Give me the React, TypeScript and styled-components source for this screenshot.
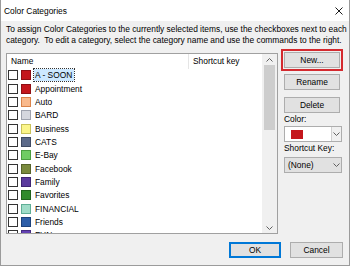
import React from "react";
import styled, { createGlobalStyle } from "styled-components";

const GlobalStyle = createGlobalStyle`
  html, body { margin: 0; padding: 0; background: #fff; }
  body {
    font-family: "Liberation Sans", Arial, sans-serif;
    font-size: 8.4px;
    color: #000;
  }
  * { box-sizing: border-box; }
`;

const Window = styled.div`
  width: 350px;
  height: 266px;
  display: flex;
  flex-direction: column;
  border: 1px solid #9b9b9b;
  border-top: none;
  background: #f0f0f0;
  overflow: hidden;
`;

const TitleBar = styled.div`
  height: 21px;
  flex: none;
  display: flex;
  align-items: center;
  justify-content: space-between;
  padding-left: 3px;
  background: #fff;
`;

const CloseBox = styled.div`
  width: 21px;
  height: 21px;
  display: flex;
  align-items: center;
  justify-content: center;
`;

const Body = styled.div`
  flex: 1;
  display: flex;
  flex-direction: column;
  padding: 3px 6px 0 5px;
`;

const Description = styled.div`
  line-height: 11px;
  white-space: nowrap;
`;

const MainRow = styled.div`
  display: flex;
  align-items: flex-start;
  margin-top: 3px;
`;

const ListBox = styled.div`
  width: 272px;
  height: 181px;
  margin-top: 4px;
  display: flex;
  background: #fff;
  border: 1px solid #a0a0a0;
`;

const ListMain = styled.div`
  flex: 1;
  display: flex;
  flex-direction: column;
  overflow: hidden;
`;

const Header = styled.div`
  height: 14.5px;
  flex: none;
  display: flex;
`;

const HeaderCell = styled.div<{ $width?: number }>`
  ${p => (p.$width ? `width: ${p.$width}px;` : "flex: 1;")}
  display: flex;
  align-items: center;
  padding-left: 4px;
  border-right: ${p => (p.$width ? "1px solid #e5e5e5" : "none")};
`;

const Row = styled.div`
  height: 13.36px;
  flex: none;
  display: flex;
  align-items: center;
  padding-left: 1px;
`;

const Check = styled.div`
  width: 10px;
  height: 10px;
  flex: none;
  background: #fff;
  border: 1px solid #333;
`;

const Swatch = styled.div<{ $fill: string; $edge: string }>`
  width: 10px;
  height: 10px;
  flex: none;
  margin-left: 3px;
  background: ${p => p.$fill};
  border: 1px solid ${p => p.$edge};
`;

const ItemName = styled.span<{ $selected?: boolean }>`
  margin-left: 3px;
  padding: 0 2px 0 1px;
  line-height: 12px;
  white-space: nowrap;
  background: ${p => (p.$selected ? "#cce8ff" : "transparent")};
  outline: ${p => (p.$selected ? "1px dotted #333" : "none")};
`;

const ScrollBar = styled.div`
  width: 15px;
  flex: none;
  display: flex;
  flex-direction: column;
  background: #f0f0f0;
`;

const ScrollArrow = styled.div`
  height: 11px;
  flex: none;
  display: flex;
  align-items: center;
  justify-content: center;
`;

const ScrollTrack = styled.div`
  flex: 1;
  padding: 0 2px;
`;

const Thumb = styled.div`
  height: 65px;
  background: #cdcdcd;
`;

const SideColumn = styled.div`
  width: 62px;
  margin-left: 3px;
  display: flex;
  flex-direction: column;
`;

const Highlight = styled.div`
  border: 2px solid #d42a2f;
  padding: 1px;
`;

const Button = styled.div<{ $width?: number; $default?: boolean }>`
  width: ${p => p.$width ?? 56}px;
  height: 16px;
  flex: none;
  display: flex;
  align-items: center;
  justify-content: center;
  background: #e1e1e1;
  border: ${p => (p.$default ? "2px solid #0078d7" : "1px solid #adadad")};
`;

const SideButton = styled(Button)<{ $gap: number }>`
  margin: ${p => p.$gap}px 0 0 3px;
`;

const SideLabel = styled.div`
  margin: 1px 0 0 3px;
  line-height: 11px;
`;

const Select = styled.div<{ $white?: boolean; $gap: number }>`
  width: 58px;
  height: 16px;
  margin: ${p => p.$gap}px 0 0 3px;
  display: flex;
  align-items: center;
  background: ${p => (p.$white ? "#fff" : "#e1e1e1")};
  border: 1px solid #adadad;
`;

const SelectValue = styled.div`
  flex: 1;
  padding-left: 3px;
  display: flex;
  align-items: center;
`;

const ColorChip = styled.div`
  width: 12px;
  height: 9px;
  margin-left: 3px;
  background: #c4161c;
`;

const DropArrow = styled.div<{ $split?: boolean }>`
  width: 10px;
  height: 100%;
  display: flex;
  align-items: center;
  justify-content: center;
  border-left: ${p => (p.$split ? "1px solid #d0d0d0" : "none")};
  background: ${p => (p.$split ? "#f0f0f0" : "transparent")};
`;

const Footer = styled.div`
  display: flex;
  justify-content: flex-end;
  gap: 9px;
  margin-top: 8px;
`;

const Chevron = ({ up }: { up?: boolean }) => (
  <svg width="7" height="4" viewBox="0 0 7 4">
    <polyline
      points={up ? "0.5,3.5 3.5,0.5 6.5,3.5" : "0.5,0.5 3.5,3.5 6.5,0.5"}
      fill="none"
      stroke="#606060"
      strokeWidth="1"
    />
  </svg>
);

const categories = [
  { name: "A - SOON", fill: "#c4161c", edge: "#8e0f14", selected: true },
  { name: "Appointment", fill: "#c4161c", edge: "#8e0f14" },
  { name: "Auto", fill: "#f9b98c", edge: "#d9834a" },
  { name: "BARD", fill: "#d5d7de", edge: "#9ea2ad" },
  { name: "Business", fill: "#fbf58a", edge: "#c9c25a" },
  { name: "CATS", fill: "#5c6a8a", edge: "#3f4a63" },
  { name: "E-Bay", fill: "#6fcc63", edge: "#4a9e40" },
  { name: "Facebook", fill: "#7a8a3d", edge: "#56632a" },
  { name: "Family", fill: "#5b3a9e", edge: "#3e2573" },
  { name: "Favorites", fill: "#2f8a2b", edge: "#1f631d" },
  { name: "FINANCIAL", fill: "#9fdcc8", edge: "#5fae96" },
  { name: "Friends", fill: "#2d5ea8", edge: "#1d427b" },
  { name: "FUN", fill: "#6341b3", edge: "#452b82" },
];

export default function App() {
  return (
    <>
      <GlobalStyle />
      <Window>
        <TitleBar>
          <span>Color Categories</span>
          <CloseBox>
            <svg width="8" height="8" viewBox="0 0 8 8">
              <path d="M0.5 0.5 L7.5 7.5 M7.5 0.5 L0.5 7.5" stroke="#000" strokeWidth="0.9" />
            </svg>
          </CloseBox>
        </TitleBar>
        <Body>
          <Description>
            To assign Color Categories to the currently selected items, use the checkboxes next to each
            <br />
            category.&nbsp; To edit a category, select the category name and use the commands to the right.
          </Description>
          <MainRow>
            <ListBox>
              <ListMain>
                <Header>
                  <HeaderCell $width={182}>Name</HeaderCell>
                  <HeaderCell>Shortcut key</HeaderCell>
                </Header>
                {categories.map(c => (
                  <Row key={c.name}>
                    <Check />
                    <Swatch $fill={c.fill} $edge={c.edge} />
                    <ItemName $selected={c.selected}>{c.name}</ItemName>
                  </Row>
                ))}
              </ListMain>
              <ScrollBar>
                <ScrollArrow>
                  <Chevron up />
                </ScrollArrow>
                <ScrollTrack>
                  <Thumb />
                </ScrollTrack>
                <ScrollArrow>
                  <Chevron />
                </ScrollArrow>
              </ScrollBar>
            </ListBox>
            <SideColumn>
              <Highlight>
                <Button>New...</Button>
              </Highlight>
              <SideButton $gap={3}>Rename</SideButton>
              <SideButton $gap={7}>Delete</SideButton>
              <SideLabel>Color:</SideLabel>
              <Select $white $gap={1}>
                <SelectValue>
                  <ColorChip />
                </SelectValue>
                <DropArrow $split>
                  <Chevron />
                </DropArrow>
              </Select>
              <SideLabel>Shortcut Key:</SideLabel>
              <Select $gap={3}>
                <SelectValue>(None)</SelectValue>
                <DropArrow>
                  <Chevron />
                </DropArrow>
              </Select>
            </SideColumn>
          </MainRow>
          <Footer>
            <Button $width={52} $default>OK</Button>
            <Button $width={53}>Cancel</Button>
          </Footer>
        </Body>
      </Window>
    </>
  );
}
